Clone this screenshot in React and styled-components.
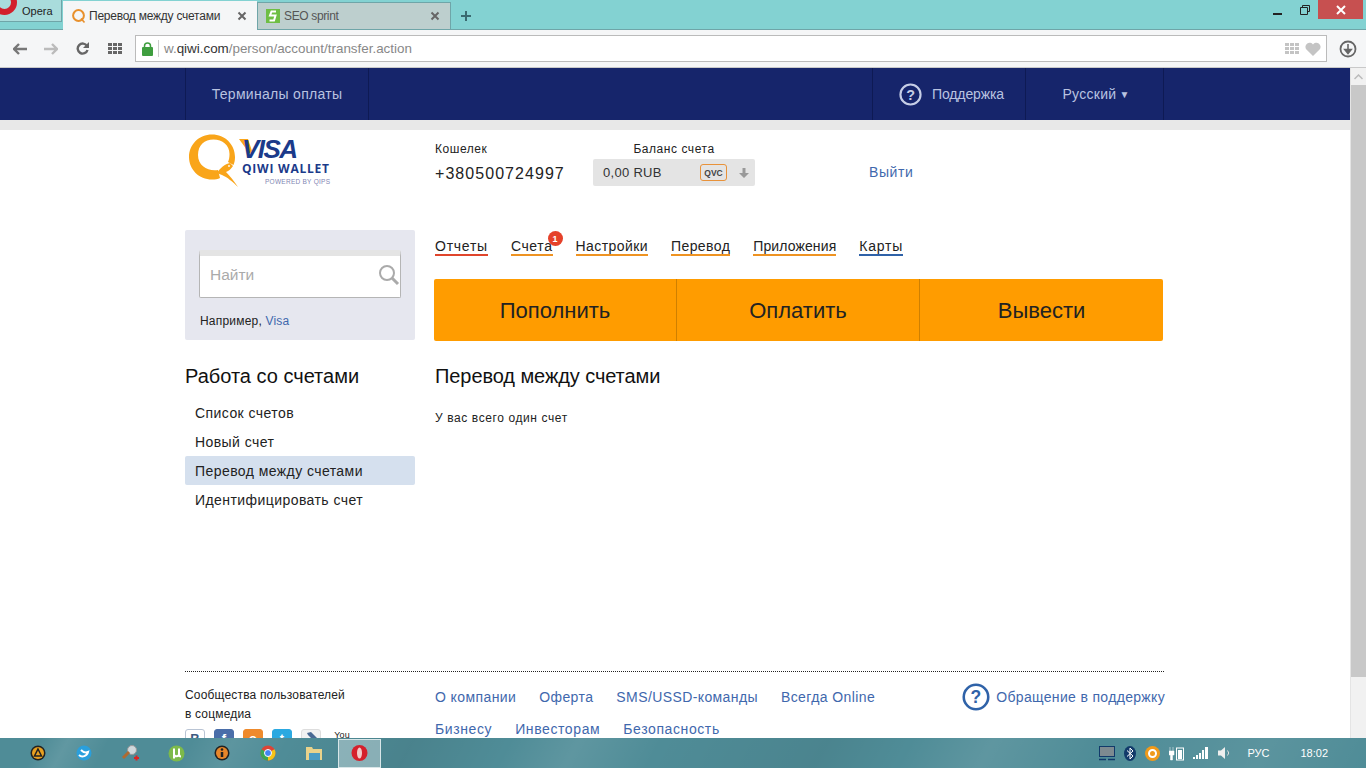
import React from 'react';
import styled, { createGlobalStyle } from 'styled-components';

const GlobalStyle = createGlobalStyle`
  * { box-sizing: border-box; }
  html, body { margin: 0; padding: 0; height: 768px; overflow: hidden; }
  body { font-family: 'Liberation Sans', Arial, sans-serif; background: #fff; }
`;

const Screen = styled.div`
  width: 1366px;
  height: 768px;
  display: flex;
  flex-direction: column;
  overflow: hidden;
`;

/* browser chrome */
const TitleBar = styled.div`
  height: 30px;
  flex: none;
  background: #83d2d2;
  border-bottom: 1px solid #6fa5a8;
  display: flex;
  align-items: flex-end;
  position: relative;
`;

const OperaButton = styled.div`
  width: 62px;
  height: 22px;
  margin-bottom: 7px;
  background: #a9dcdc;
  border: 1px solid #6fa5a8;
  border-top: none;
  border-left: none;
  font-size: 11px;
  color: #222;
  display: flex;
  align-items: center;
  padding-left: 22px;
  position: relative;
  overflow: hidden;
`;

const OperaMark = styled.span`
  position: absolute;
  left: -8px;
  top: -10px;
  width: 25px;
  height: 25px;
  border-radius: 50%;
  border: 6px solid #d2202c;
`;

const Tab = styled.div`
  width: ${p => p.$width}px;
  height: ${p => p.$active ? 29 : 27}px;
  margin-bottom: ${p => p.$active ? -1 : 0}px;
  margin-left: ${p => p.$active ? 1 : 0}px;
  background: ${p => p.$active ? '#f5f6f7' : '#bdcfce'};
  border: ${p => p.$active ? 'none' : '1px solid #6fa5a8'};
  border-bottom: none;
  display: flex;
  align-items: center;
  padding: 0 10px 0 ${p => p.$active ? 8 : 7}px;
  font-size: 12px;
  letter-spacing: ${p => p.$active ? '-0.02em' : '-0.03em'};
  color: ${p => p.$active ? '#333' : '#555'};
  gap: ${p => p.$active ? 2 : 3}px;
  position: relative;
  z-index: 1;
`;

const TabTitle = styled.span`
  flex: 1;
  white-space: nowrap;
`;

const WindowControls = styled.div`
  margin-left: auto;
  align-self: flex-start;
  display: flex;
  align-items: flex-start;
  margin-right: 3px;
`;

const WinBtn = styled.div`
  width: ${p => p.$wide ? 45 : 27}px;
  height: 19px;
  background: ${p => p.$wide ? '#c75050' : 'transparent'};
  display: flex;
  align-items: center;
  justify-content: center;
`;

const PlusBtn = styled.div`
  width: 30px;
  height: 27px;
  display: flex;
  align-items: center;
  justify-content: center;
`;

const Toolbar = styled.div`
  height: 38px;
  flex: none;
  background: #f5f6f7;
  border-bottom: 1px solid #c9c9c9;
  display: flex;
  align-items: center;
  padding-left: 13px;
`;

const ToolIcon = styled.div`
  width: ${p => p.$w}px;
  display: flex;
  align-items: center;
  justify-content: ${p => p.$end ? 'flex-end' : 'flex-start'};
`;

const UrlBox = styled.div`
  width: 1192px;
  height: 27px;
  background: #fff;
  border: 1px solid #bbb;
  display: flex;
  align-items: center;
  padding: 0 7px 0 6px;
  font-size: 13.4px;
  color: #888;
  gap: 5px;
`;

const UrlDivider = styled.span`
  width: 1px;
  height: 17px;
  background: #ccc;
`;

const UrlHost = styled.span`
  color: #333;
`;

const UrlRight = styled.div`
  margin-left: auto;
  display: flex;
  align-items: center;
  gap: 5px;
  margin-right: -2px;
`;

const Viewport = styled.div`
  flex: 1;
  min-height: 0;
  display: flex;
`;

const Page = styled.div`
  flex: 1;
  min-width: 0;
  overflow: hidden;
`;

const ScrollBar = styled.div`
  width: 16px;
  flex: none;
  background: #f1f1f1;
  display: flex;
  flex-direction: column;
  border-left: 1px solid #e4e4e4;
`;

const ScrollArrow = styled.div`
  height: 17px;
  display: flex;
  align-items: center;
  justify-content: center;
`;

const ScrollThumb = styled.div`
  height: 592px;
  background: #c8c8c8;
`;

/* site header */
const TopNav = styled.div`
  height: 52px;
  background: #16256b;
`;

const Wrap = styled.div`
  width: 979px;
  margin-left: 185px;
`;

const TopNavInner = styled(Wrap)`
  height: 52px;
  display: flex;
  color: #b9c3e0;
  font-size: 14px;
  letter-spacing: 0.3px;
  border-left: 1px solid #0e1a54;
`;

const TopItem = styled.div`
  width: ${p => p.$w}px;
  display: flex;
  align-items: center;
  justify-content: center;
  gap: 10px;
  padding-left: ${p => p.$pad || 0}px;
  border-right: 1px solid #0e1a54;
  ${p => p.$push ? 'margin-left: auto; border-left: 1px solid #0e1a54; letter-spacing: -0.1px;' : ''}
`;

const LangArrow = styled.span`
  font-size: 10px;
  margin-left: -7px;
`;

const GreyStrip = styled.div`
  height: 10px;
  background: #e8e8e8;
`;

const AccountRow = styled(Wrap)`
  height: 100px;
  display: flex;
  position: relative;
`;

const LogoBox = styled.div`
  width: 250px;
  padding: 3px 0 0 3px;
`;

const WalletCol = styled.div`
  width: 158px;
  padding-top: 12px;
`;

const SmallLabel = styled.div`
  font-size: 12px;
  color: #222;
  line-height: 15px;
  letter-spacing: 0.55px;
  text-align: ${p => p.$center ? 'center' : 'left'};
`;

const Phone = styled.div`
  font-size: 16px;
  letter-spacing: 1.05px;
  color: #222;
  margin-top: 7px;
  line-height: 20px;
`;

const BalanceCol = styled.div`
  width: 162px;
  padding-top: 12px;
`;

const BalanceBox = styled.div`
  height: 27px;
  margin-top: 2px;
  background: #e4e4e4;
  border-radius: 2px;
  display: flex;
  align-items: center;
  padding: 0 5px 0 10px;
  font-size: 13px;
  letter-spacing: 0.3px;
  color: #333;
`;

const QvcBadge = styled.span`
  margin-left: auto;
  width: 27px;
  height: 17px;
  border: 1px solid #e8923a;
  border-radius: 3px;
  font-size: 8.5px;
  font-weight: bold;
  letter-spacing: 0;
  color: #444;
  display: flex;
  align-items: center;
  justify-content: center;
`;

const BalanceArrow = styled.svg`
  margin-left: 11px;
`;

const Logout = styled.a`
  margin-left: 114px;
  margin-top: 34px;
  font-size: 14px;
  letter-spacing: 0.6px;
  color: #3f68ad;
`;

/* body columns */
const Columns = styled(Wrap)`
  display: grid;
  grid-template-columns: 230px 729px;
  column-gap: 19px;
`;

const LeftCol = styled.div`
  height: 441px;
`;

const RightCol = styled.div`
  height: 441px;
`;

const SearchPanel = styled.div`
  height: 110px;
  background: #e6e7ef;
  border-radius: 2px;
  padding: 20px 14px 0;
`;

const SearchInput = styled.div`
  height: 48px;
  width: 202px;
  background: #fff;
  border: 1px solid #b5b5b5;
  border-top: 6px solid #e4e4e4;
  border-radius: 2px;
  display: flex;
  align-items: center;
  justify-content: space-between;
  padding: 0 0 4px 10px;
  font-size: 15.5px;
  color: #aaa;
`;

const Example = styled.div`
  margin-top: 16px;
  padding-left: 1px;
  font-size: 12px;
  letter-spacing: 0.2px;
  color: #222;
`;

const LinkText = styled.span`
  color: #3f68ad;
`;

const MainTop = styled.div`
  height: 111px;
`;

const TabsRow = styled.div`
  display: flex;
  gap: 23px;
  padding: 8px 0 0 1px;
`;

const MenuLink = styled.div`
  font-size: 14px;
  letter-spacing: ${p => p.$spacing}px;
  line-height: 16px;
  color: #222;
  border-bottom: 2px solid ${p => p.$color};
  position: relative;
`;

const Badge = styled.span`
  position: absolute;
  right: -10px;
  top: -7px;
  width: 15px;
  height: 15px;
  border-radius: 50%;
  background: #e5412a;
  color: #fff;
  font-size: 9px;
  letter-spacing: 0;
  font-weight: bold;
  display: flex;
  align-items: center;
  justify-content: center;
`;

const ActionBar = styled.div`
  margin-top: 23px;
  height: 62px;
  background: #ff9c00;
  border-radius: 2px;
  display: grid;
  grid-template-columns: 242px 243px 1fr;
`;

const ActionBtn = styled.div`
  display: flex;
  align-items: center;
  justify-content: center;
  padding-top: 2px;
  font-size: 22px;
  color: #222;
  border-left: ${p => p.$first ? 'none' : '1px solid #cf8000'};
`;

const SideTitle = styled.h2`
  margin: 24px 0 10px;
  font-weight: normal;
  font-size: 20px;
  line-height: 24px;
  color: #111;
`;

const SideItem = styled.div`
  height: 29px;
  padding-left: 10px;
  display: flex;
  align-items: center;
  font-size: 14px;
  letter-spacing: 0.43px;
  color: #222;
  border-radius: 2px;
  background: ${p => p.$active ? '#d5e0ee' : 'transparent'};
`;

const ContentTitle = styled.h1`
  margin: 23px 0 0 1px;
  font-weight: normal;
  font-size: 20px;
  letter-spacing: -0.08px;
  line-height: 24px;
  color: #111;
`;

const ContentText = styled.p`
  margin: 23px 0 0 1px;
  font-size: 12px;
  letter-spacing: 0.6px;
  line-height: 15px;
  color: #222;
`;

/* footer */
const Footer = styled(Wrap)`
  border-top: 1px dotted #222;
  display: grid;
  grid-template-columns: 250px 1fr;
  padding-top: 14px;
`;

const Community = styled.div`
  font-size: 12px;
  line-height: 19px;
  letter-spacing: 0.17px;
  color: #222;
`;

const SocialRow = styled.div`
  display: flex;
  gap: 9px;
  margin-top: 5px;
`;

const Social = styled.span`
  width: 20px;
  height: 20px;
  border-radius: 3px;
  background: ${p => p.$bg};
  border: 1px solid ${p => p.$line};
  color: ${p => p.$ink};
  font-size: 13px;
  line-height: 18px;
  font-weight: bold;
  display: flex;
  justify-content: center;
`;

const YouTube = styled.span`
  font-size: 9px;
  line-height: 12px;
  color: #222;
  width: 24px;
  text-align: center;
`;

const FooterLinks = styled.div`
  display: flex;
  flex-direction: column;
  gap: 14px;
  padding-top: 2px;
`;

const FooterRow = styled.div`
  display: flex;
  gap: 23px;
  height: 18px;
  font-size: 14px;
  letter-spacing: ${p => p.$loose ? 0.6 : 0.4}px;
  line-height: 18px;
  color: #3f68ad;
  align-items: center;
`;

const SupportLink = styled.div`
  margin-left: auto;
  display: flex;
  align-items: center;
  gap: 6px;
  margin-right: -1px;
  letter-spacing: 0.33px;
`;

/* taskbar */
const Taskbar = styled.div`
  height: 30px;
  flex: none;
  background:
    linear-gradient(118deg, transparent 3%, rgba(255,255,255,0.1) 5%, transparent 8%, transparent 14%, rgba(255,255,255,0.08) 17%, transparent 21%, rgba(0,0,0,0.07) 30%, transparent 37%, rgba(255,255,255,0.09) 42%, transparent 48%, rgba(0,0,0,0.06) 60%, transparent 66%, rgba(255,255,255,0.09) 72%, transparent 80%, rgba(255,255,255,0.07) 92%, transparent),
    #4f8c97;
  display: flex;
  align-items: center;
  color: #fff;
  position: relative;
`;

const TaskIcons = styled.div`
  display: flex;
  align-items: center;
  padding-left: 15px;
  height: 100%;
`;

const TaskIcon = styled.div`
  width: 46px;
  display: flex;
  align-items: center;
  justify-content: center;
  height: 100%;
`;

const TaskActive = styled(TaskIcon)`
  width: 43px;
  height: 29px;
  background: rgba(255,255,255,0.35);
  border: 1px solid #d8e6e8;
  margin-left: 1px;
`;

const Tray = styled.div`
  margin-left: auto;
  display: flex;
  align-items: center;
  gap: 9px;
  padding-right: 38px;
  font-size: 11px;
`;

const TrayText = styled.span`
  margin-left: ${p => p.$ml}px;
`;

const navLinks = [
  ['Отчеты', '#e0452c', 0.75],
  ['Счета', '#ee9322', 0.6, true],
  ['Настройки', '#ee9322', 0.42],
  ['Перевод', '#ee9322', 0.42],
  ['Приложения', '#ee9322', 0.12],
  ['Карты', '#2f62a8', 0.75],
];

const sideItems = ['Список счетов', 'Новый счет', 'Перевод между счетами', 'Идентифицировать счет'];

const socials = [
  ['В', '#fff', '#b9c4d4', '#3d5a80'],
  ['f', '#4a6ea9', '#4a6ea9', '#fff'],
  ['о', '#ee8a2c', '#ee8a2c', '#fff'],
  ['t', '#2ba9e1', '#2ba9e1', '#fff'],
];

const QiwiMark = ({ size }) => (
  <svg width={size} height={size} viewBox="0 0 16 16">
    <circle cx="7.500" cy="7.500" r="5.400" fill="none" stroke="#e8902c" strokeWidth="2" />
    <path d="M10 10.500l3.500 4" stroke="#e8902c" strokeWidth="1.600" />
  </svg>
);

const Logo = () => (
  <svg width="150" height="60" viewBox="0 0 150 60">
    <path
      fillRule="evenodd"
      fill="#f9a51a"
      d="M24 1.500C11 1.500 1 11.500 1 24s10 22.500 23 22.500c3 0 6-.5 8-1.500l-2-8c-10 1.500-20-4-20-15C10 12 16.500 6.500 25.500 6.500S41.500 12 41.500 21c0 3-.5 6-1.500 8l5.500 3c1-2.500 1.500-5 1.500-8C47 11.500 37 1.500 24 1.500z"
    />
    <path
      fill="#f9a51a"
      d="M29 40C32 35 37 31 42 30l3 3c-2 3-4 5-7 6 4 4 8 9 12 15-5-5-11-10-16-12-2-1-3-1-5-2z"
    />
    <circle cx="41" cy="33" r="0.900" fill="#fff" />
    <path d="M51 6h9l4 12-2 3z" fill="#f9a51a" />
    <text x="54" y="25" fontFamily="'Liberation Sans', sans-serif" fontSize="26" fontWeight="bold" fontStyle="italic" fill="#1b3a8a" textLength="56">VISA</text>
    <text x="54" y="40" fontFamily="'Open Sans', sans-serif" fontSize="12" fontWeight="bold" fill="#1b3a8a" textLength="87">QIWI WALLET</text>
    <text x="77" y="51" fontFamily="'Liberation Sans', sans-serif" fontSize="6.500" fill="#7f86b3" textLength="65">POWERED BY QIPS</text>
  </svg>
);

const HelpIcon = ({ size, color }) => (
  <svg width={size} height={size} viewBox="0 0 24 24">
    <circle cx="12" cy="12" r="10.500" fill="none" stroke={color} strokeWidth="2.200" />
    <text x="12" y="17.500" textAnchor="middle" fontFamily="'Liberation Sans', sans-serif" fontSize="15" fontWeight="bold" fill={color}>?</text>
  </svg>
);

const Grid = ({ color }) => (
  <svg width="15" height="12" viewBox="0 0 15 12" fill={color}>
    {[0, 5, 10].map(x => [0, 4, 8].map(y => <rect key={x + '-' + y} x={x} y={y} width="4" height="3" />))}
  </svg>
);

const CloseX = () => (
  <svg width="10" height="10" viewBox="0 0 10 10"><path d="M1.500 1.500l7 7m0-7l-7 7" stroke="#666" strokeWidth="2" /></svg>
);

export default function App() {
  return (
    <>
      <GlobalStyle />
      <Screen>
        <TitleBar>
          <OperaButton><OperaMark />Opera</OperaButton>
          <Tab $active $width={194}>
            <QiwiMark size={16} />
            <TabTitle>Перевод между счетами</TabTitle>
            <CloseX />
          </Tab>
          <Tab $width={194}>
            <svg width="16" height="16" viewBox="0 0 16 16">
              <rect x="1" y="1" width="14" height="14" fill="#6ebe44" />
              <path d="M11 3.500H6.500L5 7.500h5.500L9 12.500H4.500" fill="none" stroke="#fff" strokeWidth="2" />
            </svg>
            <TabTitle>SEO sprint</TabTitle>
            <CloseX />
          </Tab>
          <PlusBtn>
            <svg width="10" height="10" viewBox="0 0 10 10"><path d="M5 0v10M0 5h10" stroke="#3a6a70" strokeWidth="2" /></svg>
          </PlusBtn>
          <WindowControls>
            <WinBtn>
              <svg width="9" height="12" viewBox="0 0 9 12"><rect y="9" width="9" height="2" fill="#222" /></svg>
            </WinBtn>
            <WinBtn>
              <svg width="10" height="10" viewBox="0 0 10 10"><path d="M2.500 2.500V.5h7v6h-2M.5 2.500h7v7h-7z" fill="none" stroke="#222" /></svg>
            </WinBtn>
            <WinBtn $wide>
              <svg width="10" height="10" viewBox="0 0 10 10"><path d="M1 1l8 8m0-8l-8 8" stroke="#fff" strokeWidth="2" /></svg>
            </WinBtn>
          </WindowControls>
        </TitleBar>
        <Toolbar>
          <ToolIcon $w={31}>
            <svg width="14" height="12" viewBox="0 0 14 12"><path d="M6 1L1 6l5 5M1 6h13" fill="none" stroke="#777" strokeWidth="2.400" /></svg>
          </ToolIcon>
          <ToolIcon $w={32}>
            <svg width="14" height="12" viewBox="0 0 14 12"><path d="M8 1l5 5-5 5M13 6H0" fill="none" stroke="#bbb" strokeWidth="2.400" /></svg>
          </ToolIcon>
          <ToolIcon $w={32}>
            <svg width="13" height="13" viewBox="0 0 13 13"><path d="M11 4A5 5 0 1 0 11.500 8" fill="none" stroke="#666" strokeWidth="2.400" /><path d="M13 0v6H7z" fill="#666" /></svg>
          </ToolIcon>
          <ToolIcon $w={27}><Grid color="#666" /></ToolIcon>
          <UrlBox>
            <svg width="11" height="14" viewBox="0 0 11 14">
              <rect y="5" width="11" height="9" rx="1" fill="#3f9e3f" />
              <path d="M2.500 6V4a3 3 0 0 1 6 0v2" fill="none" stroke="#3f9e3f" strokeWidth="1.500" />
            </svg>
            <UrlDivider />
            <span>w.<UrlHost>qiwi.com</UrlHost>/person/account/transfer.action</span>
            <UrlRight>
              <Grid color="#c4c4c4" />
              <svg width="16" height="14" viewBox="0 0 16 14"><path d="M8 14L1.200 7.200A4 4 0 0 1 8 2.500a4 4 0 0 1 6.800 4.700z" fill="#c4c4c4" /></svg>
            </UrlRight>
          </UrlBox>
          <ToolIcon $w={30} $end>
            <svg width="18" height="18" viewBox="0 0 18 18">
              <circle cx="9" cy="9" r="7.500" fill="none" stroke="#666" strokeWidth="1.800" />
              <path d="M9 4v6M5.800 9.500H12.200L9 13.500z" stroke="#666" strokeWidth="1.600" fill="#666" />
            </svg>
          </ToolIcon>
        </Toolbar>

        <Viewport>
          <Page>
            <TopNav>
              <TopNavInner>
                <TopItem $w={183}>Терминалы оплаты</TopItem>
                <TopItem $w={154} $push $pad={5}><HelpIcon size={23} color="#c6cee6" />Поддержка</TopItem>
                <TopItem $w={138} $pad={3}>Русский <LangArrow>▼</LangArrow></TopItem>
              </TopNavInner>
            </TopNav>
            <GreyStrip />
            <AccountRow>
              <LogoBox><Logo /></LogoBox>
              <WalletCol>
                <SmallLabel>Кошелек</SmallLabel>
                <Phone>+380500724997</Phone>
              </WalletCol>
              <BalanceCol>
                <SmallLabel $center>Баланс счета</SmallLabel>
                <BalanceBox>
                  0,00 RUB
                  <QvcBadge>QVC</QvcBadge>
                  <BalanceArrow width="12" height="12" viewBox="0 0 12 12"><path d="M4.500 1h3v5H11L6 11 1 6h3.500z" fill="#999" /></BalanceArrow>
                </BalanceBox>
              </BalanceCol>
              <Logout>Выйти</Logout>
            </AccountRow>
            <Columns>
              <LeftCol>
                <SearchPanel>
                  <SearchInput>
                    Найти
                    <svg width="22" height="22" viewBox="0 0 22 22">
                      <circle cx="9" cy="9" r="7" fill="none" stroke="#aaa" strokeWidth="2" />
                      <path d="M14 14l6 6" stroke="#aaa" strokeWidth="3" />
                    </svg>
                  </SearchInput>
                  <Example>Например, <LinkText>Visa</LinkText></Example>
                </SearchPanel>
                <SideTitle>Работа со счетами</SideTitle>
                {sideItems.map((item, i) => (
                  <SideItem key={item} $active={i === 2}>{item}</SideItem>
                ))}
              </LeftCol>
              <RightCol>
                <MainTop>
                  <TabsRow>
                    {navLinks.map(([label, color, spacing, badge]) => (
                      <MenuLink key={label} $color={color} $spacing={spacing}>
                        {label}
                        {badge && <Badge>1</Badge>}
                      </MenuLink>
                    ))}
                  </TabsRow>
                  <ActionBar>
                    <ActionBtn $first>Пополнить</ActionBtn>
                    <ActionBtn>Оплатить</ActionBtn>
                    <ActionBtn>Вывести</ActionBtn>
                  </ActionBar>
                </MainTop>
                <ContentTitle>Перевод между счетами</ContentTitle>
                <ContentText>У вас всего один счет</ContentText>
              </RightCol>
            </Columns>
            <Footer>
              <Community>
                Сообщества пользователей<br />в соцмедиа
                <SocialRow>
                  {socials.map(([glyph, bg, line, ink]) => (
                    <Social key={glyph} $bg={bg} $line={line} $ink={ink}>{glyph}</Social>
                  ))}
                  <Social $bg="#f1f1f1" $line="#ddd" $ink="#3d5a80">
                    <svg width="14" height="14" viewBox="0 0 14 14"><path d="M3 3l4-1 6 6-3 3-6-6z" fill="#4a6a94" /></svg>
                  </Social>
                  <YouTube>You</YouTube>
                </SocialRow>
              </Community>
              <FooterLinks>
                <FooterRow>
                  <span>О компании</span>
                  <span>Оферта</span>
                  <span>SMS/USSD-команды</span>
                  <span>Всегда Online</span>
                  <SupportLink><HelpIcon size={28} color="#2f62a8" />Обращение в поддержку</SupportLink>
                </FooterRow>
                <FooterRow $loose>
                  <span>Бизнесу</span>
                  <span>Инвесторам</span>
                  <span>Безопасность</span>
                </FooterRow>
              </FooterLinks>
            </Footer>
          </Page>
          <ScrollBar>
            <ScrollArrow>
              <svg width="9" height="6" viewBox="0 0 9 6"><path d="M.5 5l4-4 4 4" fill="none" stroke="#bbb" strokeWidth="1.500" /></svg>
            </ScrollArrow>
            <ScrollThumb />
          </ScrollBar>
        </Viewport>

        <Taskbar>
          <TaskIcons>
            <TaskIcon>
              <svg width="16" height="16" viewBox="0 0 16 16"><circle cx="8" cy="8" r="7.500" fill="#222" /><circle cx="8" cy="8" r="6" fill="#e8a020" /><path d="M8 4l3.500 7h-7z" fill="none" stroke="#222" strokeWidth="1.500" /></svg>
            </TaskIcon>
            <TaskIcon>
              <svg width="16" height="18" viewBox="0 0 16 18"><circle cx="8" cy="9" r="7.500" fill="#2a9fdc" /><path d="M3 11c3 3 8 1 9-3-2 1-5 0-7-2" fill="none" stroke="#fff" strokeWidth="2" /></svg>
            </TaskIcon>
            <TaskIcon>
              <svg width="18" height="18" viewBox="0 0 18 18"><circle cx="11" cy="6" r="4.500" fill="#cfd8dc" stroke="#999" /><path d="M8 8l-6 6" stroke="#b06a30" strokeWidth="3" /><path d="M13 14h5m-2.500-2.500v5" stroke="#d22" strokeWidth="2" /></svg>
            </TaskIcon>
            <TaskIcon>
              <svg width="17" height="17" viewBox="0 0 17 17"><circle cx="8.500" cy="8.500" r="8" fill="#7dba4a" /><path d="M6 3.500v10M6 9c0 3 5 3 5 0V3.500M11 9c0 1.500.5 2.500 2 2.500" fill="none" stroke="#fff" strokeWidth="2" /></svg>
            </TaskIcon>
            <TaskIcon>
              <svg width="16" height="16" viewBox="0 0 16 16"><circle cx="8" cy="8" r="7.500" fill="#222" /><circle cx="8" cy="8" r="6" fill="#e8872a" /><path d="M8 7v5" stroke="#222" strokeWidth="2.500" /><circle cx="8" cy="4.500" r="1.300" fill="#222" /></svg>
            </TaskIcon>
            <TaskIcon>
              <svg width="16" height="16" viewBox="0 0 16 16">
                <circle cx="8" cy="8" r="7.500" fill="#dc4437" />
                <path d="M8 8L14.500 4.300A7.500 7.500 0 0 1 8 15.500z" fill="#f5c518" />
                <path d="M8 8L8 15.500A7.500 7.500 0 0 1 1.500 4.300z" fill="#3aa757" />
                <circle cx="8" cy="8" r="3.500" fill="#4285f4" stroke="#fff" />
              </svg>
            </TaskIcon>
            <TaskIcon>
              <svg width="17" height="15" viewBox="0 0 17 15"><path d="M0 1h6l1 2h9v11H0z" fill="#e9d28a" /><rect x="3" y="7" width="11" height="7" fill="#4a9cc4" /></svg>
            </TaskIcon>
            <TaskActive>
              <svg width="17" height="18" viewBox="0 0 17 18"><circle cx="8.500" cy="9" r="8" fill="#d5202c" /><ellipse cx="8.500" cy="9" rx="2.500" ry="5.500" fill="#f3c9c9" /></svg>
            </TaskActive>
          </TaskIcons>
          <Tray>
            <svg width="16" height="15" viewBox="0 0 16 15"><rect x=".5" y=".5" width="15" height="10" fill="#7d8a90" stroke="#123a6a" /><path d="M0 13.500h7M9 13.500h7" stroke="#123a6a" strokeWidth="1.500" /></svg>
            <svg width="12" height="15" viewBox="0 0 12 15"><ellipse cx="6" cy="7.500" rx="6" ry="7.500" fill="#123a6a" /><path d="M3 4.500l6 5.500-3 3V2l3 3-6 5.500" fill="none" stroke="#fff" /></svg>
            <svg width="15" height="15" viewBox="0 0 15 15"><circle cx="7.500" cy="7.500" r="7.500" fill="#f09a1a" /><circle cx="7.500" cy="7.500" r="3.500" fill="none" stroke="#fff" strokeWidth="2" /></svg>
            <svg width="15" height="15" viewBox="0 0 15 15"><path d="M1 1v4M4 1v4M0 5h5v4H3.500v5H1.500V9H0z" fill="#fff" stroke="#fff" strokeWidth=".5" /><rect x="7.500" y="2" width="7" height="12" fill="none" stroke="#fff" /><rect x="9" y="4" width="4" height="9" fill="#fff" /></svg>
            <svg width="16" height="12" viewBox="0 0 16 12" fill="#fff"><rect y="10" width="2" height="2" /><rect x="3" y="8" width="2" height="4" /><rect x="6" y="6" width="2" height="6" /><rect x="9" y="3" width="2" height="9" /><rect x="12" y="0" width="3" height="12" /></svg>
            <svg width="14" height="14" viewBox="0 0 14 14"><path d="M0 4.500h3L7 1v12L3 9.500H0z" fill="#eee" /><path d="M9.500 4.500a3.500 3.500 0 0 1 0 5" fill="none" stroke="#ddd" /></svg>
            <TrayText $ml={6}>РУС</TrayText>
            <TrayText $ml={22}>18:02</TrayText>
          </Tray>
        </Taskbar>
      </Screen>
    </>
  );
}
